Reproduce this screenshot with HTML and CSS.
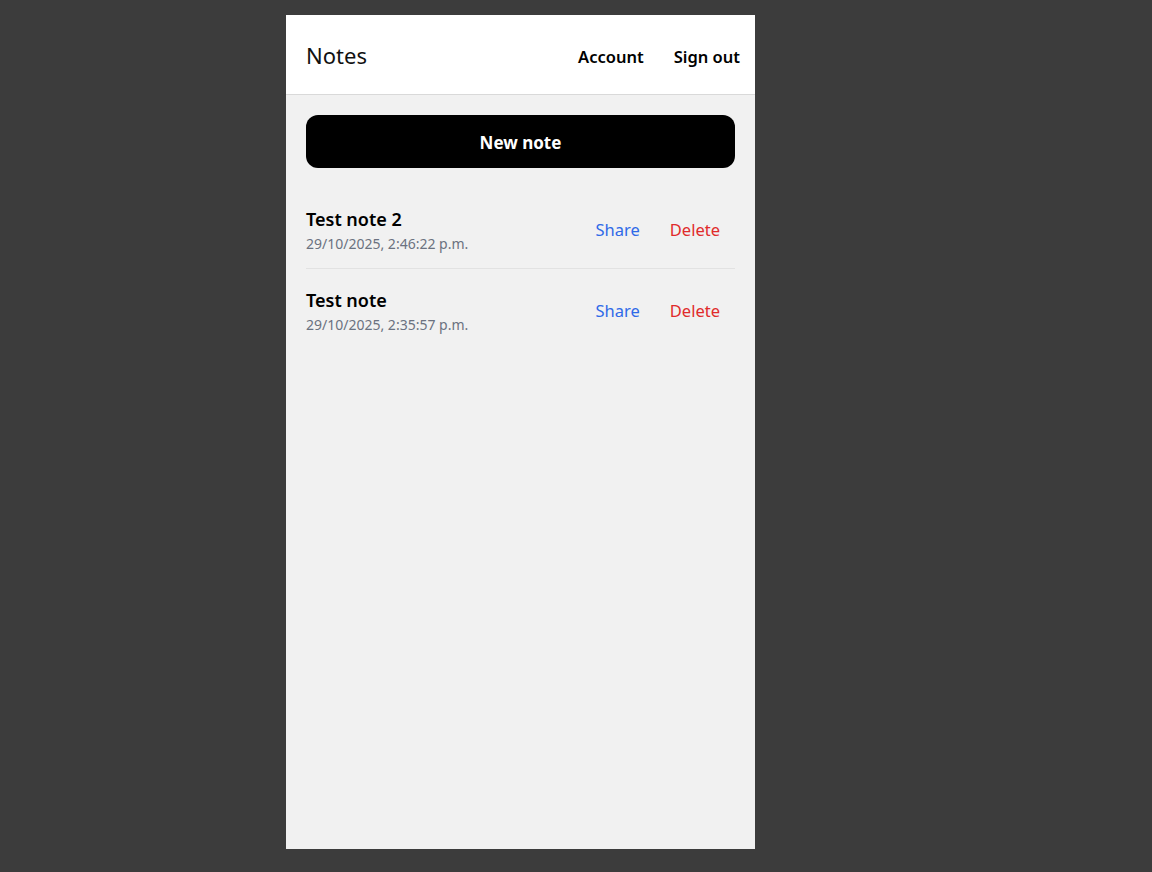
FILE: index.html
```html
<!DOCTYPE html>
<html>
<head>
<meta charset="utf-8">
<title>Notes</title>
<link rel="stylesheet" href="styles.css">
</head>
<body>
<div class="app">
  <header class="topbar">
    <h1 class="brand">Notes</h1>
    <nav class="nav">
      <a class="nav-link">Account</a>
      <a class="nav-link">Sign out</a>
    </nav>
  </header>
  <main class="content">
    <button class="new-btn">New note</button>
    <ul class="note-list">
      <li class="note">
        <div class="note-info">
          <div class="note-title">Test note 2</div>
          <div class="note-date">29/10/2025, 2:46:22 p.m.</div>
        </div>
        <div class="note-actions">
          <a class="act share">Share</a>
          <a class="act delete">Delete</a>
        </div>
      </li>
      <li class="note">
        <div class="note-info">
          <div class="note-title">Test note</div>
          <div class="note-date">29/10/2025, 2:35:57 p.m.</div>
        </div>
        <div class="note-actions">
          <a class="act share">Share</a>
          <a class="act delete">Delete</a>
        </div>
      </li>
    </ul>
  </main>
</div>
</body>
</html>
```
FILE: styles.css
```css
html, body {
  margin: 0;
  padding: 0;
  height: 100%;
}
body {
  background: #3c3c3c;
  font-family: "Noto Sans", "Open Sans", sans-serif;
  color: #000;
  display: flex;
  justify-content: flex-start;
  padding: 15px 0 23px 286px;
  box-sizing: border-box;
}
.app {
  width: 469px;
  height: 834px;
  background: #f1f1f1;
  display: flex;
  flex-direction: column;
}
.topbar {
  background: #fff;
  height: 79px;
  border-bottom: 1px solid #d9d9d9;
  display: flex;
  align-items: center;
  justify-content: space-between;
  padding-left: 20px;
  flex-shrink: 0;
}
.brand {
  margin: 0;
  padding-top: 1px;
  font-size: 22px;
  font-weight: 400;
  color: #111;
}
.nav {
  display: flex;
  padding-top: 3px;
}
.nav-link {
  padding: 0 15px;
  font-size: 16.5px;
  font-weight: 600;
  color: #000;
  cursor: pointer;
}
.content {
  padding: 20px;
  flex: 1;
}
.new-btn {
  display: block;
  width: 100%;
  height: 53px;
  padding-top: 2px;
  border: none;
  border-radius: 12px;
  background: #000;
  color: #fff;
  font-family: inherit;
  font-size: 17px;
  font-weight: 700;
}
.note-list {
  list-style: none;
  margin: 20px 0 0;
  padding: 0;
}
.note {
  display: flex;
  align-items: center;
  justify-content: space-between;
  padding: 17px 0 13px;
  border-bottom: 1px solid #e2e2e2;
}
.note:last-child {
  border-bottom: none;
}
.note-title {
  font-size: 18px;
  font-weight: 600;
  line-height: 28px;
}
.note-date {
  font-size: 14px;
  color: #6b7280;
  line-height: 22px;
}
.note-actions {
  display: flex;
  padding-bottom: 2px;
}
.act {
  padding: 0 15px;
  font-size: 16.5px;
  cursor: pointer;
}
.share { color: #2f6ae8; }
.delete { color: #e02b2b; }
```
